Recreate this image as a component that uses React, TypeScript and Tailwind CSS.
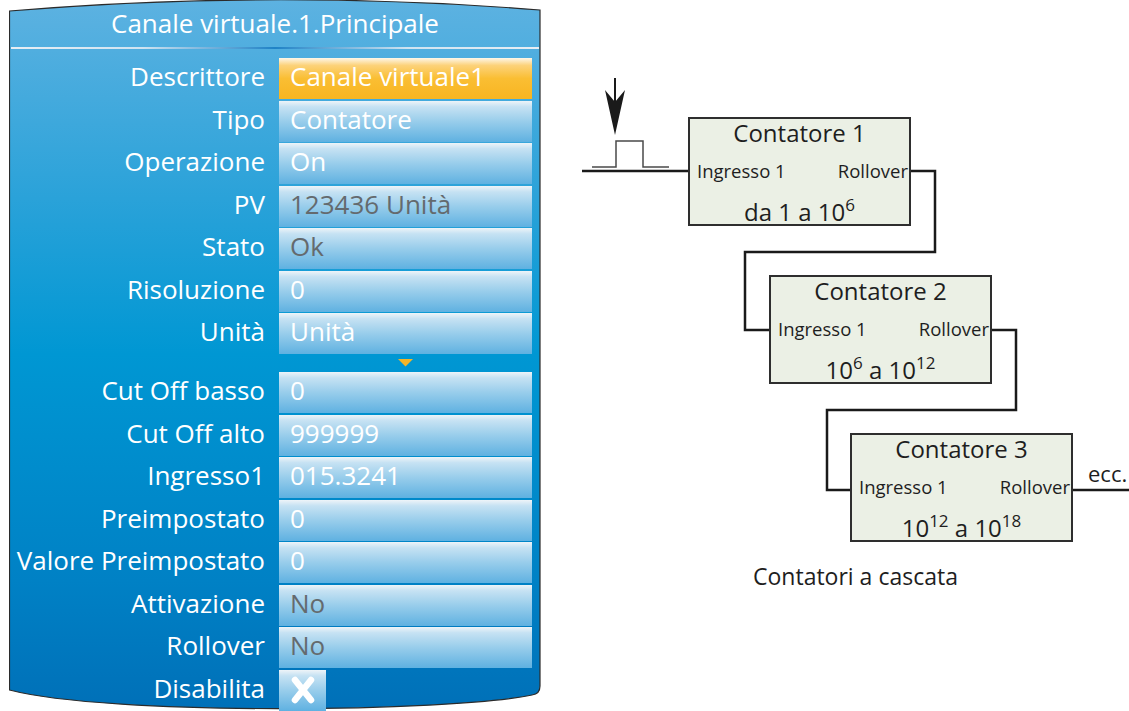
import React from "react";

type Row = { label: string; value?: string; gray?: boolean; orange?: boolean; check?: boolean };

const rowsA: Row[] = [
  { label: "Descrittore", value: "Canale virtuale1", orange: true },
  { label: "Tipo", value: "Contatore" },
  { label: "Operazione", value: "On" },
  { label: "PV", value: "123436 Unità", gray: true },
  { label: "Stato", value: "Ok", gray: true },
  { label: "Risoluzione", value: "0" },
  { label: "Unità", value: "Unità" },
];

const rowsB: Row[] = [
  { label: "Cut Off basso", value: "0" },
  { label: "Cut Off alto", value: "999999" },
  { label: "Ingresso1", value: "015.3241" },
  { label: "Preimpostato", value: "0" },
  { label: "Valore Preimpostato", value: "0" },
  { label: "Attivazione", value: "No", gray: true },
  { label: "Rollover", value: "No", gray: true },
  { label: "Disabilita", check: true },
];

const blueField =
  "bg-[linear-gradient(to_bottom,#eef4f8_0%,#c6e2f3_14%,#98cdeb_50%,#5fb1e1_100%)]";
const orangeField =
  "bg-[linear-gradient(to_bottom,#fdf7ea_0%,#fcd27a_18%,#fabe33_50%,#f8b521_100%)]";

function FieldRow({ r }: { r: Row }) {
  return (
    <div className="flex h-[41px] items-stretch">
      <div className="w-[270px] shrink-0 flex items-center justify-end pr-[14px] pb-[5px] text-white text-[26px] leading-none">
        {r.label}
      </div>
      {r.check ? (
        <div className={`w-[47px] flex items-center justify-center ${blueField}`}>
          <svg width="30" height="32" viewBox="0 0 30 32">
            <path d="M7 6 L23 26 M23 6 L7 26" stroke="#ffffff" strokeWidth="6.5" strokeLinecap="round" fill="none" />
          </svg>
        </div>
      ) : (
        <div
          className={`w-[253px] flex items-center pl-[11px] pb-[5px] text-[26px] leading-none ${
            r.orange ? orangeField : blueField
          } ${r.gray ? "text-[#646a6e]" : "text-white"}`}
        >
          {r.value}
        </div>
      )}
    </div>
  );
}

function Panel() {
  return (
    <div className="relative w-[532px] h-[711px] ml-[9px] shrink-0 overflow-hidden">
      <svg className="absolute inset-0" width="532" height="711" viewBox="0 0 532 711">
        <defs>
          <linearGradient id="pg" x1="0" y1="0" x2="0" y2="1">
            <stop offset="0" stopColor="#5db2e1" />
            <stop offset="0.28" stopColor="#2aa2d9" />
            <stop offset="0.5" stopColor="#0097d3" />
            <stop offset="0.82" stopColor="#0081c5" />
            <stop offset="1" stopColor="#0070b8" />
          </linearGradient>
        </defs>
        <path
          d="M0.5 11 Q266 -11 531 10 L531 686 Q531 694 523 695 C440 712 100 716 0.5 690 Z"
          fill="url(#pg)"
          stroke="#2b2b2b"
          strokeWidth="1.2"
        />
      </svg>
      <div className="relative flex flex-col">
        <div className="h-[47px] pb-[1px] flex items-center justify-center text-white text-[26px] leading-none">
          Canale virtuale.1.Principale
        </div>
        <div className="h-[2px] mx-[2px] bg-[linear-gradient(to_right,#e8eef4_0%,#cfe3f1_25%,#1f82c6_50%,#cfe3f1_75%,#e8eef4_100%)]" />
        <div className="h-[9px]" />
        <div className="flex flex-col gap-[1.5px]">
          {rowsA.map((r) => (
            <FieldRow key={r.label} r={r} />
          ))}
          <div className="h-[15px] flex items-center">
            <div className="w-[389px]" />
            <svg width="15" height="8" viewBox="0 0 15 8">
              <path d="M0 0 L15 0 L7.5 7.5 Z" fill="#f5b427" />
            </svg>
          </div>
          {rowsB.map((r) => (
            <FieldRow key={r.label} r={r} />
          ))}
        </div>
      </div>
    </div>
  );
}

function CounterBox({
  title,
  left,
  top,
  range,
}: {
  title: string;
  left: string;
  top: string;
  range: React.ReactNode;
}) {
  return (
    <div
      className={`absolute ${left} ${top} w-[223px] h-[109px] border-2 border-[#2e2e2e] bg-[#ebf0e5] flex flex-col text-[#1e1e1e]`}
    >
      <div className="pt-[1px] h-[27px] text-center text-[24px] leading-[26px] whitespace-nowrap">{title}</div>
      <div className="mt-[14px] flex justify-between pl-[7px] pr-[1px] text-[18.5px] leading-[22px] whitespace-nowrap">
        <span>Ingresso 1</span>
        <span>Rollover</span>
      </div>
      <div className="mt-[17px] text-center text-[24px] leading-[26px] whitespace-nowrap">{range}</div>
    </div>
  );
}

function Sup({ children }: { children: React.ReactNode }) {
  return <span className="text-[17px] relative top-[-10px] align-baseline">{children}</span>;
}

function Diagram() {
  return (
    <div className="relative flex-1 h-[711px] text-[#1e1e1e]">
      <svg className="absolute inset-0" width="588" height="711" viewBox="0 0 588 711">
        <path d="M41 171 H147" stroke="#1a1a1a" strokeWidth="2.5" fill="none" />
        <path d="M51 167 H75 V141 H102 V167 H128" stroke="#4a4a4a" strokeWidth="1.5" fill="none" />
        <path d="M74 78 V104" stroke="#1a1a1a" strokeWidth="2" fill="none" />
        <path d="M64 90 L74 135 L84 90 L74 102 Z" fill="#1a1a1a" />
        <path d="M370 171 H394 V252 H204 V330 H228" stroke="#1a1a1a" strokeWidth="2.5" fill="none" />
        <path d="M451 330 H475 V410 H286 V490 H309" stroke="#1a1a1a" strokeWidth="2.5" fill="none" />
        <path d="M532 490 H588" stroke="#1a1a1a" strokeWidth="2.5" fill="none" />
      </svg>
      <CounterBox
        title="Contatore 1"
        left="left-[147px]"
        top="top-[117px]"
        range={
          <>
            da 1 a 10<Sup>6</Sup>
          </>
        }
      />
      <CounterBox
        title="Contatore 2"
        left="left-[228px]"
        top="top-[275px]"
        range={
          <>
            10<Sup>6</Sup> a 10<Sup>12</Sup>
          </>
        }
      />
      <CounterBox
        title="Contatore 3"
        left="left-[309px]"
        top="top-[433px]"
        range={
          <>
            10<Sup>12</Sup> a 10<Sup>18</Sup>
          </>
        }
      />
      <div className="absolute left-[547px] top-[460px] text-[22px] leading-[26px] whitespace-nowrap">ecc.</div>
      <div className="absolute left-[212px] top-[562px] text-[23px] leading-[28px] whitespace-nowrap">Contatori a cascata</div>
    </div>
  );
}

export default function App() {
  return (
    <div className="w-[1129px] h-[711px] bg-white flex overflow-hidden font-['Open_Sans','Noto_Sans',sans-serif]">
      <Panel />
      <Diagram />
    </div>
  );
}
